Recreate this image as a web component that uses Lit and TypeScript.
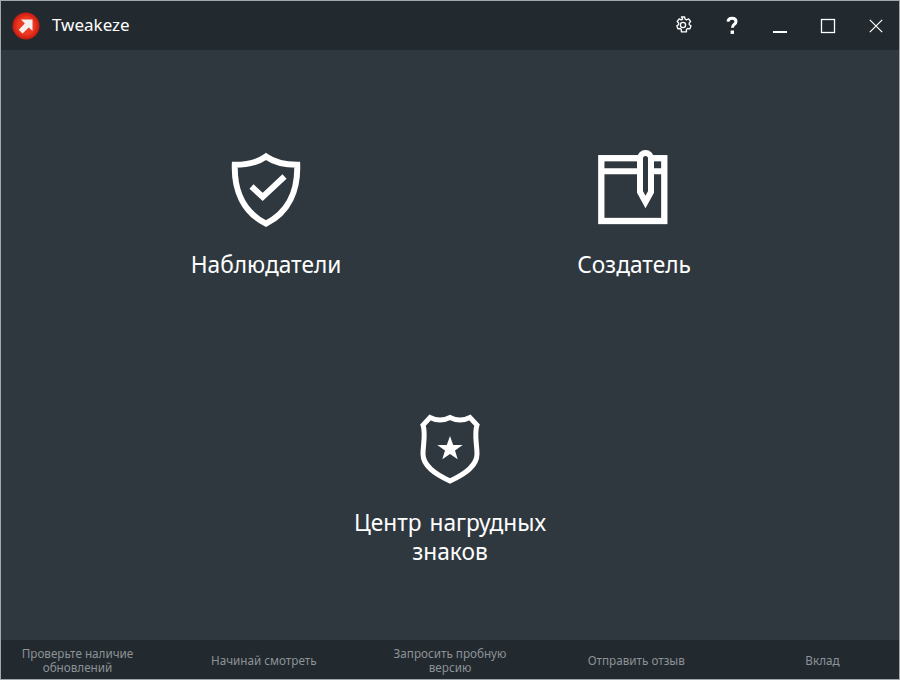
import { LitElement, html, css } from "lit";
import { customElement } from "lit/decorators.js";

@customElement("app-root")
export class AppRoot extends LitElement {
  static styles = css`
    :host { display: block; width: 900px; height: 680px; font-family: "Noto Sans", sans-serif; }
    .win { box-sizing: border-box; width: 900px; height: 680px; border: 1px solid #a5a8aa; display: flex; flex-direction: column; background: #30383f; overflow: hidden; }
    .title { height: 49px; flex: none; background: #222a30; display: flex; align-items: center; }
    .logo { width: 28px; height: 28px; margin-left: 11px; display: block; }
    .name { margin-left: 12px; margin-bottom: 2px; font-size: 17px; color: #fff; flex: 1; }
    .ctl { width: 48px; height: 49px; display: flex; align-items: center; justify-content: center; }
    .ctl svg { display: block; margin-left: 2px; }
    .ctl svg.gear { margin-left: 0; margin-bottom: 1px; }
    .main { flex: 1; min-height: 0; display: flex; flex-wrap: wrap; justify-content: center; align-content: flex-start; row-gap: 130px; padding-top: 100px; }
    .item { width: 368px; display: flex; flex-direction: column; align-items: center; }
    .item svg { display: block; width: 80px; height: 80px; }
    .label { margin-top: 20px; width: 220px; text-align: center; color: #fff; font-size: 22.7px; line-height: 30px; }
    .label.wrapped { margin-top: 18px; line-height: 29px; word-spacing: 2px; }
    .foot { height: 39px; flex: none; box-sizing: border-box; padding-top: 1px; background: #222a30; display: flex; justify-content: center; align-items: center; gap: 42.25px; }
    .foot div { width: 144px; flex: none; color: #8e9296; font-size: 11.7px; line-height: 14px; text-align: center; }
  `;

  render() {
    return html`<div class="win">
      <div class="title">
        <svg class="logo" viewBox="0 0 28 28">
          <defs><radialGradient id="g" cx="50%" cy="50%" r="50%"><stop offset="0.6" stop-color="#ee3a22"/><stop offset="1" stop-color="#c8180f"/></radialGradient></defs>
          <circle cx="14" cy="14" r="13.5" fill="url(#g)"/>
          <path d="M9 7.5H20.5V19L16.8 15.5 10.5 21.5 6.8 17.8 12.8 11.5Z" fill="#f4f0ee"/>
        </svg>
        <div class="name">Tweakeze</div>
        <div class="ctl"><svg class="gear" width="20" height="20" viewBox="0 0 20 20" fill="none" stroke="#fff" stroke-width="1.3" stroke-linejoin="round"><path d="M8.4 2.5h3.2l.5 2.2 1.5.7 2-1 2 2.6-1.5 1.6.2 1.6 1.7 1.1-1.1 3-2.3-.3-1.2 1.1.1 2.2h-5.2l.1-2.2-1.2-1.1-2.3.3-1.1-3 1.7-1.1.2-1.6-1.5-1.6 2-2.6 2 1 1.5-.7z" transform="translate(0 -.5)"/><circle cx="10" cy="10" r="2.6"/></svg></div>
        <div class="ctl"><svg width="20" height="24" viewBox="0 0 20 24" fill="none"><path d="M6 7.6c.2-2.2 1.8-3.4 4-3.4 2.400 0 4 1.300 4 3.300 0 3-3.600 3-3.600 6.200" stroke="#fff" stroke-width="3"/><rect x="8.600" y="16.500" width="3.400" height="3.400" fill="#fff"/></svg></div>
        <div class="ctl"><svg width="16" height="24" viewBox="0 0 16 24"><rect x="1" y="17" width="14" height="2" fill="#fff"/></svg></div>
        <div class="ctl"><svg width="16" height="16" viewBox="0 0 16 16"><rect x="1.500" y="1.500" width="13" height="13" fill="none" stroke="#fff" stroke-width="1.300"/></svg></div>
        <div class="ctl"><svg width="16" height="16" viewBox="0 0 16 16"><path d="M1.800 1.800 14.200 14.200M14.200 1.800 1.800 14.200" stroke="#fff" stroke-width="1.200"/></svg></div>
      </div>
      <div class="main">
        <div class="item">
          <svg viewBox="0 0 80 80" fill="none" stroke="#fff" stroke-width="6">
            <path d="M40 6.500C33 11.500 22 14.800 8.800 14.800 8 40 17 62 40 73.600 63 62 72 40 71.200 14.800 58 14.800 47 11.500 40 6.500Z"/>
            <path d="M25.500 36.500 36.700 47 58.500 26.500"/>
          </svg>
          <div class="label">Наблюдатели</div>
        </div>
        <div class="item">
          <svg viewBox="0 0 80 80" fill="none" stroke="#fff" stroke-width="6.300">
            <rect x="7.300" y="8.200" width="63" height="62.800"/>
            <path d="M7 21.300H71" stroke-width="6"/>
            <path d="M46 8.500a5.500 5.500 0 0 1 11 0V42L51.500 52 46 42Z" fill="#30383f" stroke-width="6"/>
          </svg>
          <div class="label">Создатель</div>
        </div>
        <div class="item">
          <svg viewBox="0 0 80 80" fill="none" stroke="#fff">
            <path d="M20 7.500Q30 12.500 40 7.500 50 12.500 60 7.500L67 15C64 24 67 34 67 44 67 56 55 64 40 71 25 64 13 56 13 44 13 34 16 24 13 15Z" stroke-width="5"/>
            <path d="M40 26 43.200 35 52.700 35 45 40.500 47.700 49.300 40 44 32.300 49.300 35 40.500 27.300 35 36.800 35Z" fill="#fff" stroke="none"/>
          </svg>
          <div class="label wrapped">Центр нагрудных знаков</div>
        </div>
      </div>
      <div class="foot">
        <div>Проверьте наличие обновлений</div>
        <div>Начинай смотреть</div>
        <div>Запросить пробную версию</div>
        <div>Отправить отзыв</div>
        <div>Вклад</div>
      </div>
    </div>`;
  }
}
